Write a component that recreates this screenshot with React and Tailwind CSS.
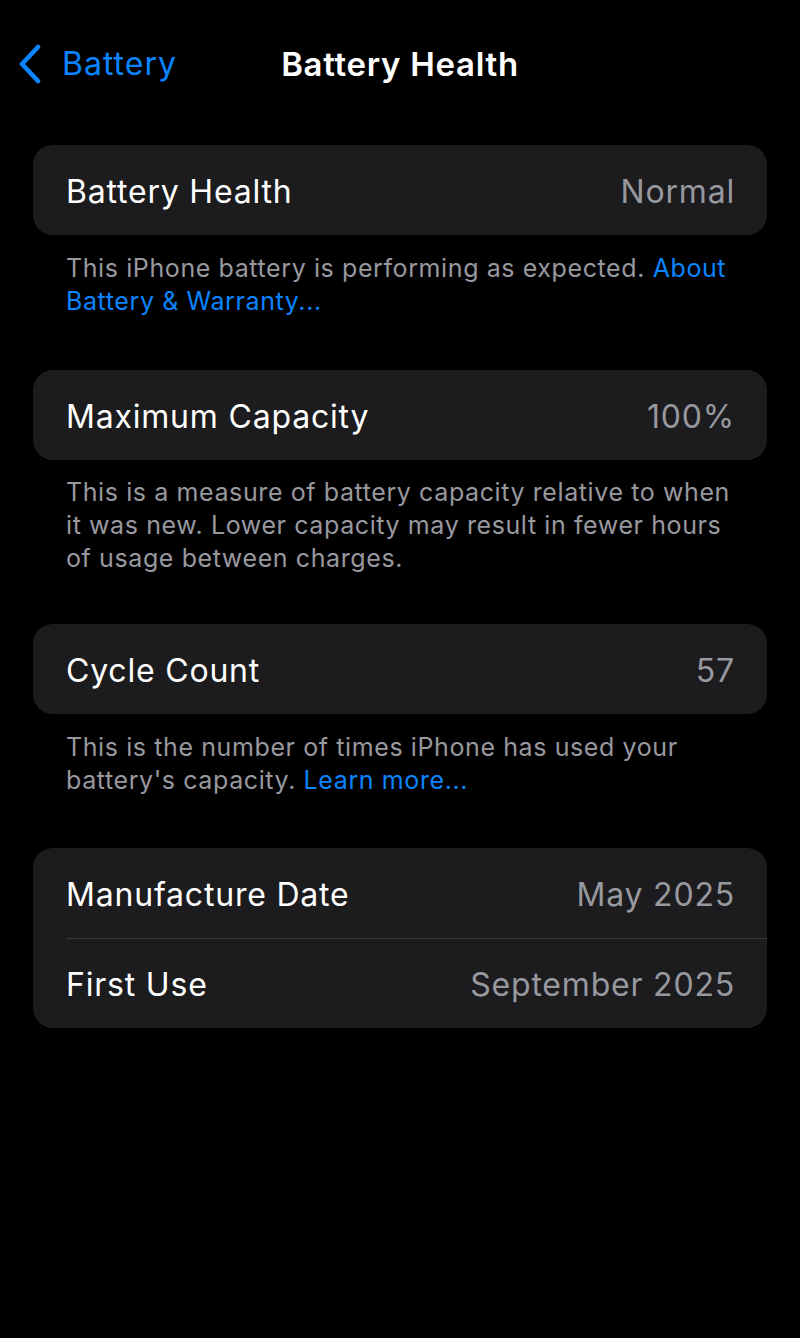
export default function App() {
  const font = { fontFamily: 'Inter, "Noto Sans", "Liberation Sans", sans-serif' };
  const Row = ({ label, value }) => (
    <div className="flex h-[90px] items-center justify-between pr-[33px] pt-[3px]">
      <span className="text-[32px] text-white tracking-[0.8px]">{label}</span>
      <span className="text-[32px] text-[#98989f] tracking-[0.8px] -mr-[1px]">{value}</span>
    </div>
  );
  return (
    <div className="min-h-[1338px] w-[800px] bg-black" style={font}>
      <div className="relative flex h-[128px] items-center">
        <div className="absolute left-[16px] top-[44px] flex items-center">
          <svg width="28" height="40" viewBox="0 0 28 40" fill="none">
            <path d="M22 3 L6 20 L22 37" stroke="#0a84ff" strokeWidth="4.5" strokeLinecap="round" strokeLinejoin="round" />
          </svg>
          <span className="ml-[18px] text-[32px] leading-[40px] text-[#0a84ff] tracking-[1px]">Battery</span>
        </div>
        <div className="absolute left-0 right-0 top-[44px] text-center text-[33px] leading-[40px] font-semibold text-white tracking-[0.7px]">
          Battery Health
        </div>
      </div>
      <div className="mt-[17px] px-[33px]">
        <div className="rounded-[20px] bg-[#1c1c1e] pl-[33px]">
          <Row label="Battery Health" value="Normal" />
        </div>
        <p className="mt-[17px] px-[33px] text-[25px] leading-[33px] text-[#98989f] tracking-[0.6px]">
          This iPhone battery is performing as expected. <span className="text-[#0a84ff]">About Battery &amp; Warranty...</span>
        </p>
        <div className="mt-[52px] rounded-[20px] bg-[#1c1c1e] pl-[33px]">
          <Row label="Maximum Capacity" value="100%" />
        </div>
        <p className="mt-[16px] px-[33px] text-[25px] leading-[33px] text-[#98989f] tracking-[0.6px]">
          This is a measure of battery capacity relative to when it was new. Lower capacity may result in fewer hours of usage between charges.
        </p>
        <div className="mt-[49px] rounded-[20px] bg-[#1c1c1e] pl-[33px]">
          <Row label="Cycle Count" value="57" />
        </div>
        <p className="mt-[17px] px-[33px] text-[25px] leading-[33px] text-[#98989f] tracking-[0.6px]">
          This is the number of times iPhone has used your battery's capacity. <span className="text-[#0a84ff]">Learn more...</span>
        </p>
        <div className="mt-[51px] rounded-[20px] bg-[#1c1c1e] pl-[33px]">
          <Row label="Manufacture Date" value="May 2025" />
          <div className="h-px bg-[#38383a]" />
          <div className="-mt-px">
            <Row label="First Use" value="September 2025" />
          </div>
        </div>
      </div>
    </div>
  );
}
